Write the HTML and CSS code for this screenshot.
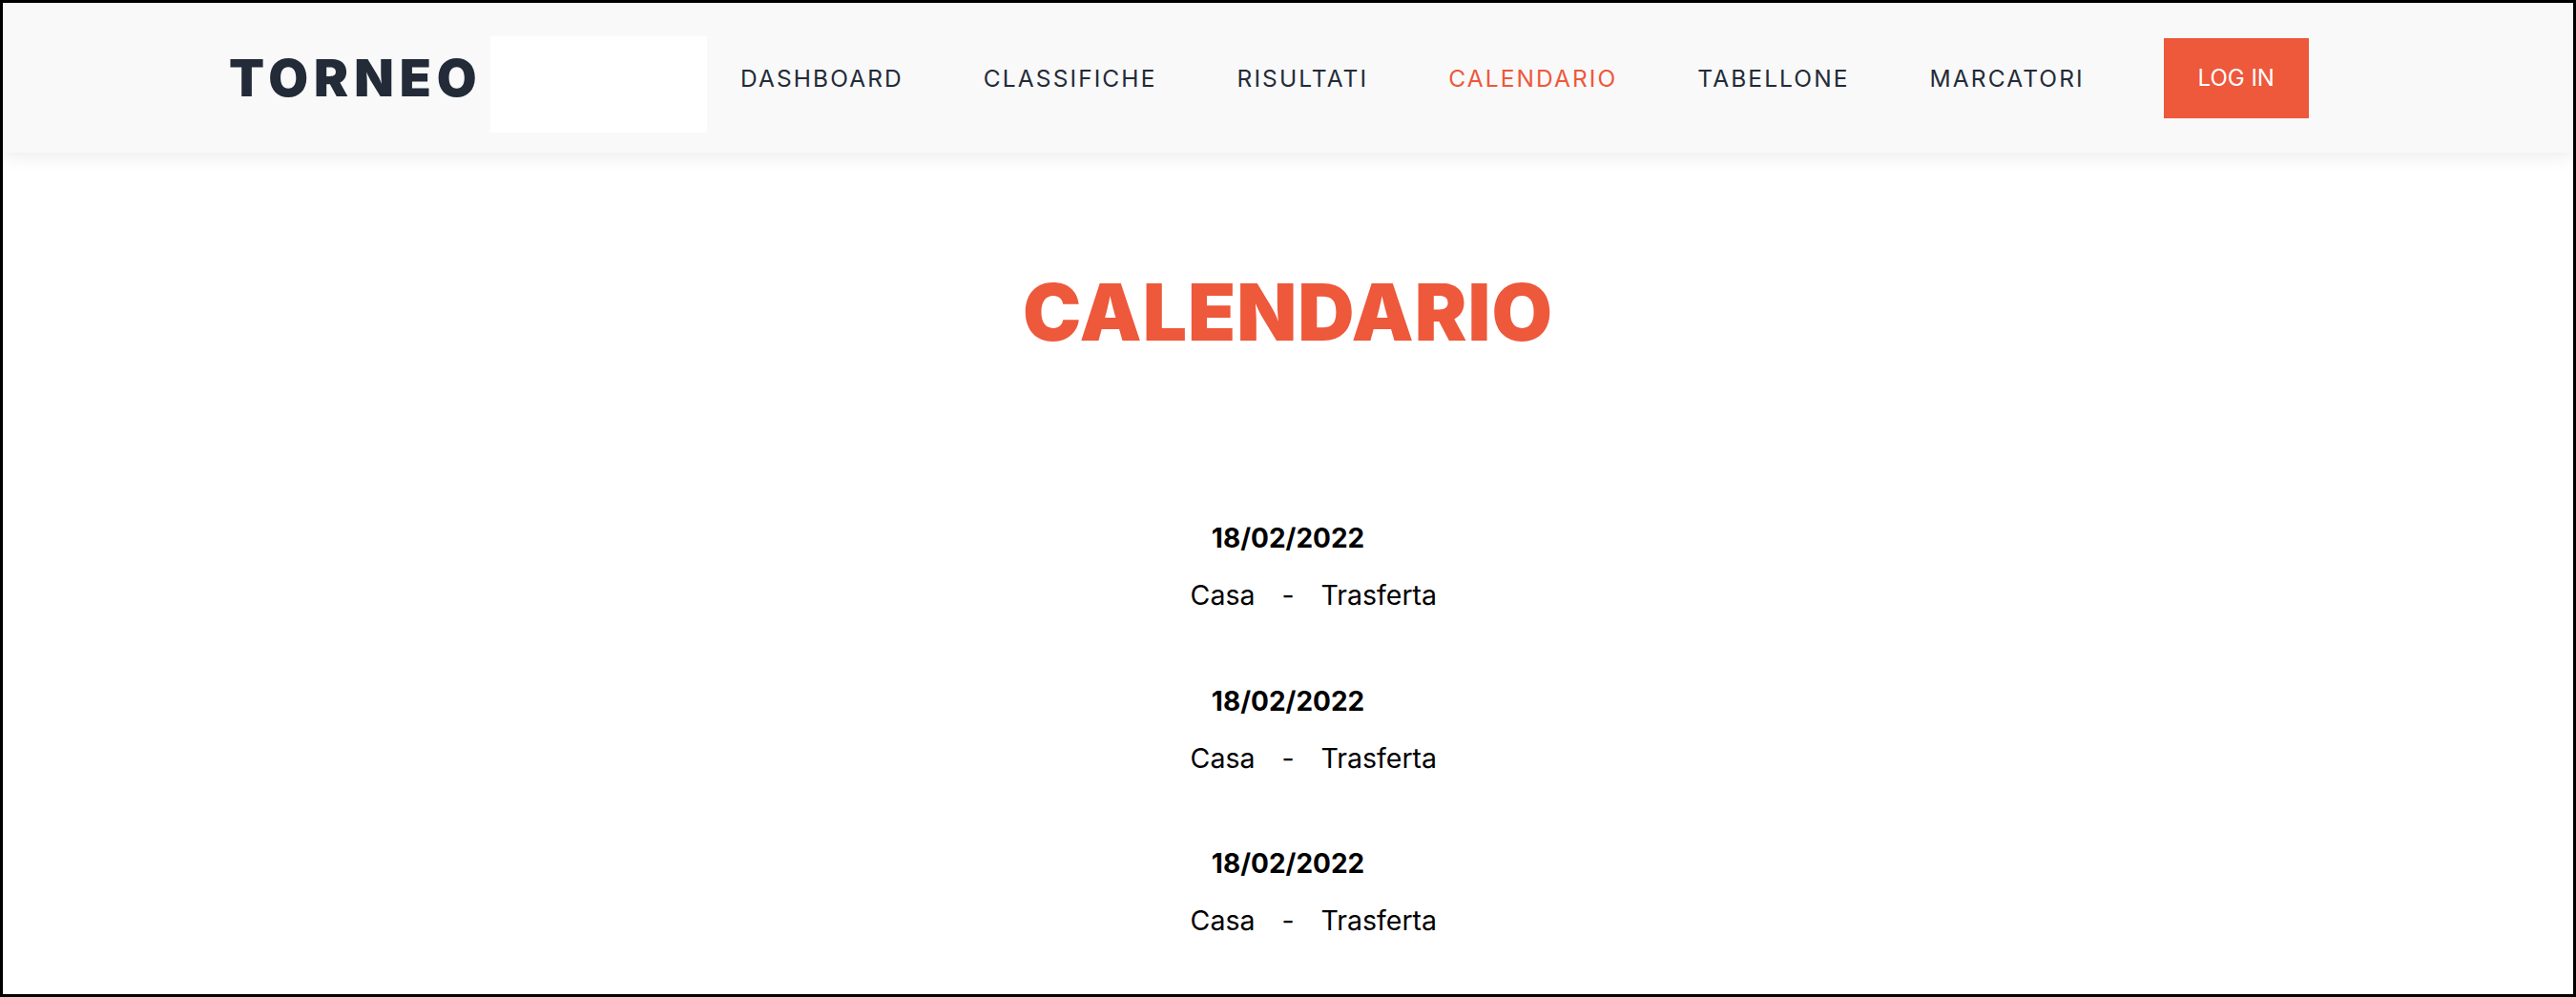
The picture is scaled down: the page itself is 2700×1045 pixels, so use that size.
FILE: index.html
```html
<!DOCTYPE html>
<html lang="it">
<head>
<meta charset="utf-8">
<title>Torneo - Calendario</title>
<link rel="stylesheet" href="styles.css">
</head>
<body>
<div class="frame">
  <header class="navbar">
    <div class="nav-inner">
      <a class="brand" href="#">TORNEO</a>
      <div class="brand-logo"></div>
      <nav class="menu">
        <a class="menu-link" href="#">DASHBOARD</a>
        <a class="menu-link" href="#">CLASSIFICHE</a>
        <a class="menu-link" href="#">RISULTATI</a>
        <a class="menu-link active" href="#">CALENDARIO</a>
        <a class="menu-link" href="#">TABELLONE</a>
        <a class="menu-link" href="#">MARCATORI</a>
        <a class="login-btn" href="#">LOG IN</a>
      </nav>
    </div>
  </header>
  <main class="content">
    <h1 class="page-title">CALENDARIO</h1>
    <section class="matches">
      <div class="match">
        <div class="match-date">18/02/2022</div>
        <div class="match-teams"><span class="home">Casa</span><span class="sep">-</span><span class="away">Trasferta</span></div>
      </div>
      <div class="match">
        <div class="match-date">18/02/2022</div>
        <div class="match-teams"><span class="home">Casa</span><span class="sep">-</span><span class="away">Trasferta</span></div>
      </div>
      <div class="match">
        <div class="match-date">18/02/2022</div>
        <div class="match-teams"><span class="home">Casa</span><span class="sep">-</span><span class="away">Trasferta</span></div>
      </div>
    </section>
  </main>
</div>
</body>
</html>
```

FILE: styles.css
```css
* { box-sizing: border-box; }
html, body { margin: 0; padding: 0; }
body {
  font-family: Inter, "Noto Sans", "DejaVu Sans", sans-serif;
  background: #fff;
  color: #000;
}
.frame {
  width: 2700px;
  height: 1045px;
  border: 3px solid #000;
  overflow: hidden;
  background: #fff;
}
.navbar {
  height: 157px;
  background: #f9f9f9;
  box-shadow: 0 4px 18px rgba(0, 0, 0, 0.08);
  position: relative;
  z-index: 1;
}
.nav-inner {
  height: 100%;
  display: flex;
  align-items: center;
  padding-left: 237px;
}
.brand {
  width: 274px;
  flex: none;
  font-size: 54px;
  font-weight: 900;
  color: #232b38;
  text-decoration: none;
  letter-spacing: 6px;
}
.brand-logo {
  width: 227px;
  height: 101px;
  margin-top: 14px;
  background: #fff;
  flex: none;
}
.menu {
  display: flex;
  align-items: center;
}
.menu-link {
  font-size: 24.5px;
  font-weight: 400;
  letter-spacing: 2.1px;
  color: #232b38;
  text-decoration: none;
  padding: 0 42px;
}
.menu-link:first-child { padding-left: 35px; }
.menu-link.active { color: #ee583b; }
.login-btn {
  margin-left: 41px;
  width: 152px;
  height: 84px;
  display: flex;
  align-items: center;
  justify-content: center;
  background: #ee583b;
  color: #fff;
  font-size: 24px;
  text-decoration: none;
}
.content {
  display: flex;
  flex-direction: column;
  align-items: center;
}
.page-title {
  margin: 127px 0 0;
  font-size: 82px;
  line-height: 1;
  font-weight: 900;
  color: #ee583b;
  letter-spacing: 1px;
}
.matches {
  margin-top: 181px;
  display: flex;
  flex-direction: column;
  gap: 82px;
  width: 600px;
}
.match {
  display: flex;
  flex-direction: column;
  align-items: center;
  gap: 32px;
}
.match-date {
  font-size: 28px;
  line-height: 1;
  font-weight: 700;
}
.match-teams {
  width: 100%;
  display: grid;
  grid-template-columns: 1fr auto 1fr;
  column-gap: 28px;
  font-size: 28.5px;
  line-height: 1;
}
.home { text-align: right; }
.away { text-align: left; }
```
